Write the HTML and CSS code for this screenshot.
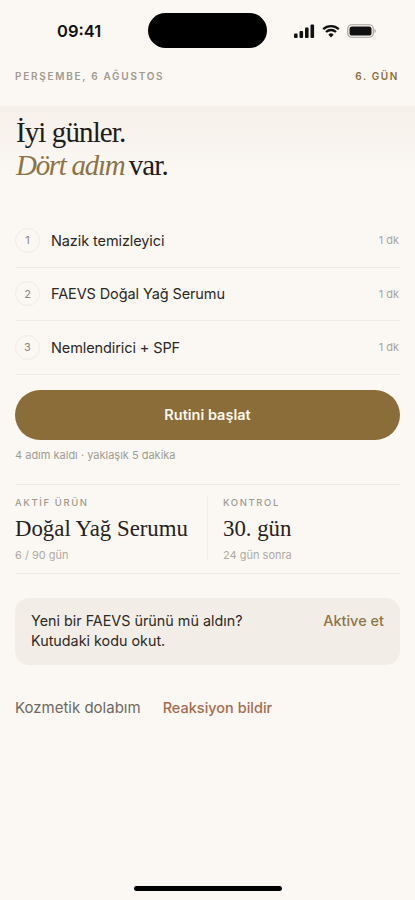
FILE: index.html
```html
<!DOCTYPE html>
<html lang="tr">
<head>
<meta charset="utf-8">
<title>Rutin</title>
<link rel="stylesheet" href="styles.css">
</head>
<body>
<main class="screen">
  <div class="status">
    <span class="time">09:41</span>
    <span class="island"></span>
    <span class="status-icons">
      <svg width="21" height="14" viewBox="0 0 21 14" class="icon"><rect x="0" y="9.500" width="3.600" height="4.500" rx="1"/><rect x="5.500" y="7" width="3.600" height="7" rx="1"/><rect x="11" y="3.500" width="3.600" height="10.500" rx="1"/><rect x="16.500" y="0.500" width="3.600" height="13.500" rx="1"/></svg>
      <svg width="18" height="14" viewBox="0 0 18 14" class="wifi"><path d="M1.200 5.200a11.200 11.200 0 0 1 15.600 0"/><path d="M4 8a7.200 7.200 0 0 1 10 0"/><path d="M9 13.600l-2.600-2.900a3.600 3.600 0 0 1 5.200 0z" class="wifi-dot"/></svg>
      <svg width="29" height="14" viewBox="0 0 29 14" class="icon"><rect x="0.750" y="0.750" width="25.500" height="12.500" rx="4" class="batt-shell"/><rect x="2.500" y="2.500" width="22" height="9" rx="2.600"/><path d="M27.500 5v4c.8-.3 1.300-1 1.300-2s-.5-1.700-1.300-2z" class="batt-cap"/></svg>
    </span>
  </div>

  <header class="topline">
    <span class="date">PERŞEMBE, 6 AĞUSTOS</span>
    <span class="day">6. GÜN</span>
  </header>

  <section class="hero">
    <h1><span class="greet">İyi günler.</span><br><em>Dört adım</em> var.</h1>
  </section>

  <div class="content">
    <ol class="steps">
      <li class="step"><span class="num">1</span><span class="name">Nazik temizleyici</span><span class="dur">1 dk</span></li>
      <li class="step"><span class="num">2</span><span class="name">FAEVS Doğal Yağ Serumu</span><span class="dur">1 dk</span></li>
      <li class="step"><span class="num">3</span><span class="name">Nemlendirici + SPF</span><span class="dur">1 dk</span></li>
    </ol>

    <button class="cta">Rutini başlat</button>
    <p class="caption">4 adım kaldı · yaklaşık 5 dakika</p>

    <section class="stats">
      <div class="stat stat-main">
        <div class="stat-label">AKTİF ÜRÜN</div>
        <div class="stat-value">Doğal Yağ Serumu</div>
        <div class="stat-sub">6 / 90 gün</div>
      </div>
      <div class="stat stat-side">
        <div class="stat-label">KONTROL</div>
        <div class="stat-value">30. gün</div>
        <div class="stat-sub">24 gün sonra</div>
      </div>
    </section>

    <section class="promo">
      <p>Yeni bir FAEVS ürünü mü aldın?<br>Kutudaki kodu okut.</p>
      <a class="promo-link">Aktive et</a>
    </section>

    <nav class="links">
      <a class="link-muted">Kozmetik dolabım</a>
      <a class="link-warn">Reaksiyon bildir</a>
    </nav>
  </div>

  <div class="home-bar"></div>
</main>
</body>
</html>
```
FILE: styles.css
```css
* { box-sizing: border-box; }
html, body { margin: 0; padding: 0; }
body { background: #fbf8f4; font-family: Inter, "Liberation Sans", sans-serif; color: #26221e; }
.screen { position: relative; width: 415px; height: 900px; overflow: hidden; background: #fbf8f4; }

.status { height: 62px; padding: 13px 39px 0 57px; display: flex; align-items: flex-start; justify-content: space-between; }
.time { font-size: 16.500px; font-weight: 600; line-height: 36px; color: #111; }
.island { position: absolute; left: 148px; top: 13px; width: 119px; height: 35px; border-radius: 18px; background: #000; }
.status-icons { display: flex; align-items: center; gap: 7px; height: 36px; }
.icon { fill: #111; display: block; }
.wifi { display: block; fill: none; stroke: #111; stroke-width: 2.300; }
.wifi-dot { fill: #111; stroke: none; }
.batt-shell { fill: none; stroke: #a8a29a; stroke-width: 1.200; }
.batt-cap { fill: #a8a29a; }

.topline { height: 44px; padding: 8px 16px 0 15px; display: flex; justify-content: space-between; font-size: 10px; font-weight: 600; letter-spacing: 1.600px; line-height: 12px; }
.date { color: #a09a8f; letter-spacing: 1.720px; }
.day { color: #8b6d3a; }

.hero { height: 108px; padding: 10px 16px 0; background: linear-gradient(180deg, #f7f0ea 0%, #fbf8f4 70%); }
h1 { margin: 0; font-family: "Liberation Serif", serif; font-weight: 400; font-size: 29px; line-height: 33px; letter-spacing: -0.900px; word-spacing: -2px; color: #1f1c19; }
h1 em { color: #8d7448; font-style: italic; letter-spacing: -1.300px; word-spacing: 0; }
.greet { word-spacing: 0; }

.content { padding: 0 15px 0 15px; }
.steps { list-style: none; margin: 0; padding: 0; }
.step { height: 53.500px; display: flex; align-items: center; border-bottom: 1px solid #efebe5; padding-right: 1px; }
.num { width: 25px; height: 25px; border: 1px solid #efebe5; border-radius: 50%; display: flex; align-items: center; justify-content: center; font-size: 11px; color: #8a857c; flex: none; }
.name { margin-left: 11px; flex: 1; font-size: 14.500px; letter-spacing: -0.100px; color: #2c2825; }
.dur { font-size: 11px; color: #aaa59c; }

.cta { display: block; width: 100%; height: 50px; margin-top: 15px; border: 0; border-radius: 25px; background: #8b6d3a; color: #fbf6ec; font-family: inherit; font-size: 14.500px; font-weight: 600; }
.caption { margin: 8px 0 0; font-size: 11px; line-height: 14px; color: #a09b92; }

.stats { margin-top: 22px; height: 90px; padding: 12px 0; border-top: 1px solid #efebe5; border-bottom: 1px solid #efebe5; display: flex; }
.stat-main { width: 193px; border-right: 1px solid #f0ece6; }
.stat-side { padding-left: 15px; }
.stat-label { font-size: 9.500px; font-weight: 500; letter-spacing: 1.600px; line-height: 12px; color: #a09a8f; }
.stat-value { font-family: "Liberation Serif", serif; font-size: 22.800px; line-height: 26px; margin-top: 7px; color: #26221e; }
.stat-sub { font-size: 11px; line-height: 14px; margin-top: 6px; color: #b0aba2; }

.promo { margin-top: 24px; height: 67px; padding: 13px 16px 0 16px; background: #f2eee7; border-radius: 14px; display: flex; justify-content: space-between; align-items: flex-start; }
.promo p { margin: 0; font-size: 14.350px; line-height: 20px; color: #2c2825; }
.promo-link { font-size: 14.500px; line-height: 20px; font-weight: 500; color: #8d7448; }

.links { margin-top: 33px; display: flex; gap: 22px; line-height: 20px; }
.link-muted { font-size: 15px; color: #6e6960; }
.link-warn { font-size: 14.500px; color: #a96a50; font-weight: 500; }

.home-bar { position: absolute; left: 134px; top: 886px; width: 148px; height: 5px; border-radius: 3px; background: #000; }
```
